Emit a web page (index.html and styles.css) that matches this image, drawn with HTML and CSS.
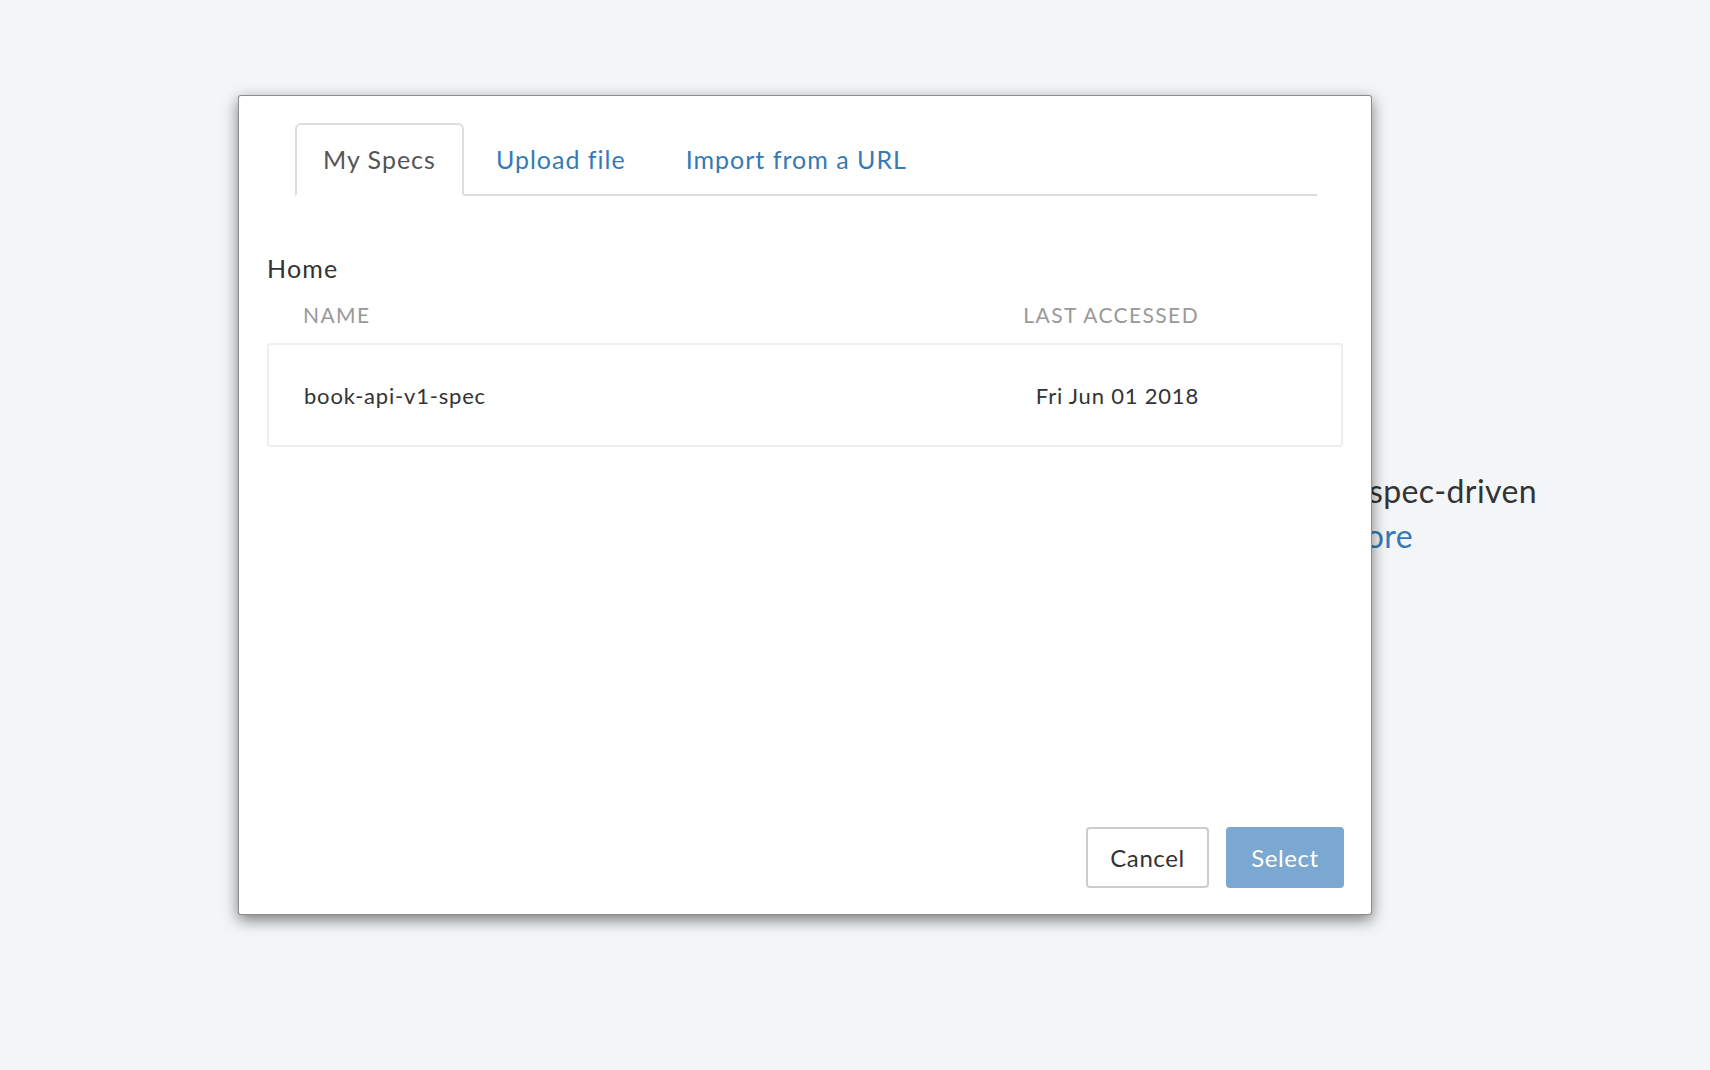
FILE: index.html
```html
<!DOCTYPE html>
<html lang="en">
<head>
<meta charset="utf-8">
<title>Select a spec</title>
<link rel="stylesheet" href="styles.css">
</head>
<body>
<main class="page">
  <div class="hero">
    <p class="hero-line">Build APIs faster with a spec-driven</p>
    <p class="hero-line more"><a href="#" class="link">Learn more</a></p>
  </div>
</main>

<div class="modal" role="dialog">
  <nav class="tabs">
    <a href="#" class="tab active">My Specs</a>
    <a href="#" class="tab">Upload file</a>
    <a href="#" class="tab">Import from a URL</a>
  </nav>
  <section class="modal-body">
    <h2 class="folder">Home</h2>
    <div class="table-head">
      <span>NAME</span>
      <span class="col-date">LAST ACCESSED</span>
    </div>
    <div class="table-box">
      <div class="table-row">
        <span>book-api-v1-spec</span>
        <span class="col-date">Fri Jun 01 2018</span>
      </div>
    </div>
  </section>
  <footer class="modal-footer">
    <button class="btn btn-default">Cancel</button>
    <button class="btn btn-primary" disabled>Select</button>
  </footer>
</div>
</body>
</html>
```

FILE: styles.css
```css
* { box-sizing: border-box; }
html, body {
  margin: 0;
  padding: 0;
  height: 100%;
}
body {
  background: #f4f5f7;
  font-family: Lato, "Open Sans", "Liberation Sans", sans-serif;
  color: #333;
  overflow: hidden;
}
.page {
  padding-top: 468px;
  width: 1537px;
}
.hero {
  display: flex;
  flex-direction: column;
  align-items: flex-end;
}
.hero-line {
  margin: 0;
  font-size: 32px;
  line-height: 45px;
  letter-spacing: 0.4px;
  white-space: nowrap;
  color: #333;
}
.hero-line.more { margin-right: 124px; }
.link { color: #337ab7; text-decoration: none; }

.modal {
  position: absolute;
  left: 238px;
  top: 95px;
  width: 1134px;
  height: 820px;
  background: #fff;
  border: 1px solid rgba(0,0,0,.45);
  border-radius: 3px;
  box-shadow: 0 5px 15px rgba(0,0,0,.5);
  display: flex;
  flex-direction: column;
}
.tabs {
  display: flex;
  margin: 27px 54px 0 56px;
  border-bottom: 2px solid #ddd;
}
.tab {
  display: block;
  font-size: 25px;
  letter-spacing: 1px;
  line-height: 30px;
  padding: 19px 26px 20px;
  margin-right: 4px;
  margin-bottom: -2px;
  color: #337ab7;
  text-decoration: none;
  border: 2px solid transparent;
  border-radius: 6px 6px 0 0;
}
.tab.active {
  color: #555;
  border-color: #ddd;
  border-bottom-color: #fff;
  background: #fff;
}
.modal-body {
  flex: 1;
  padding: 57px 28px 0 28px;
}
.folder {
  margin: 0;
  font-weight: 400;
  font-size: 25px;
  line-height: 30px;
  letter-spacing: 1.2px;
  color: #333;
}
.table-head, .table-row {
  display: grid;
  grid-template-columns: 1fr auto;
  padding: 0 144px 0 36px;
}
.table-head {
  margin-top: 14px;
  height: 46px;
  padding-top: 0;
  padding-bottom: 12px;
  align-items: center;
  font-size: 21px;
  letter-spacing: 1.4px;
  color: #999;
}
.col-date { text-align: right; }
.table-box {
  border: 2px solid #eee;
  border-radius: 3px;
}
.table-row {
  height: 100px;
  align-items: center;
  font-size: 22px;
  letter-spacing: 0.8px;
  color: #333;
  padding-left: 35px;
  padding-right: 142px;
}
.modal-footer {
  display: flex;
  justify-content: flex-end;
  gap: 17px;
  padding: 0 27px 26px 0;
}
.btn {
  font-family: inherit;
  font-size: 24px;
  letter-spacing: 0.6px;
  height: 61px;
  padding: 0 20px;
  border-radius: 4px;
  border: 2px solid #ccc;
  background: #fff;
  color: #333;
}
.btn-default { width: 123px; }
.btn-primary {
  width: 118px;
  background: #7ba8d1;
  border-color: #7ba8d1;
  color: #fff;
}
```
